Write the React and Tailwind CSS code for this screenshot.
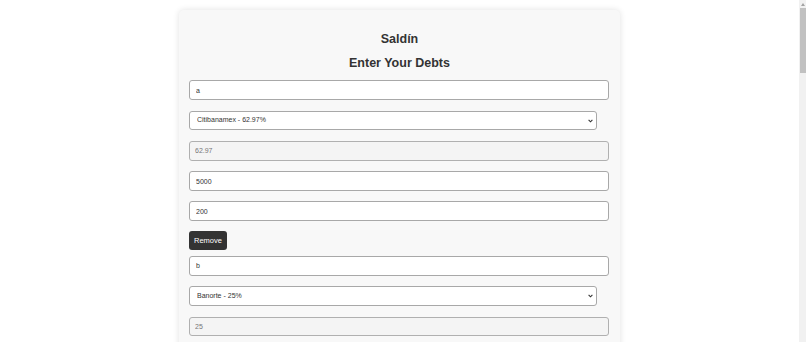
import { useState } from "react";

const BANKS = [
  { name: "Citibanamex", rate: 62.97 },
  { name: "Banorte", rate: 25 },
  { name: "BBVA", rate: 49.5 },
];

function DebtForm({ debt, onChange, onRemove }) {
  const inputCls =
    "block w-[420px] h-[20px] px-[6px] text-[7px] text-[#333] bg-white border border-[#a8a8a8] rounded-[3px] outline-none";
  return (
    <div className="flex flex-col">
      <input
        className={inputCls + " mb-[10.5px]"}
        value={debt.name}
        onChange={(e) => onChange({ ...debt, name: e.target.value })}
      />
      <div className="relative w-[408px] mb-[11px]">
        <select
          className="appearance-none block w-full h-[19.5px] pl-[7px] pr-[12px] text-[7px] text-[#333] bg-white border border-[#a8a8a8] rounded-[3px]"
          value={debt.bank}
          onChange={(e) => onChange({ ...debt, bank: e.target.value })}
        >
          {BANKS.map((b) => (
            <option key={b.name} value={b.name}>
              {b.name} - {b.rate}%
            </option>
          ))}
        </select>
        <svg
          className="pointer-events-none absolute right-[4px] top-[8px]"
          width="5"
          height="4"
          viewBox="0 0 5 4"
        >
          <path d="M0.6 0.8 L2.5 2.8 L4.4 0.8" fill="none" stroke="#333" strokeWidth="1.1" />
        </svg>
      </div>
      <input
        className="block w-[420px] h-[19.5px] px-[5px] text-[7px] text-[#777] bg-[#f4f4f4] border border-[#b0b0b0] rounded-[3px] mb-[10.5px]"
        value={BANKS.find((b) => b.name === debt.bank).rate}
        disabled
      />
      <input
        className={inputCls + " mb-[10px]"}
        value={debt.amount}
        onChange={(e) => onChange({ ...debt, amount: e.target.value })}
      />
      <input
        className={inputCls + " mb-[10px]"}
        value={debt.payment}
        onChange={(e) => onChange({ ...debt, payment: e.target.value })}
      />
      <button
        onClick={onRemove}
        className="self-start h-[19px] px-[5px] text-[7.5px] text-white bg-[#333] rounded-[3px] mb-[5.5px]"
      >
        Remove
      </button>
    </div>
  );
}

export default function App() {
  const [debts, setDebts] = useState([
    { id: 1, name: "a", bank: "Citibanamex", amount: "5000", payment: "200" },
    { id: 2, name: "b", bank: "Banorte", amount: "3000", payment: "150" },
  ]);

  return (
    <div
      className="flex h-screen overflow-hidden bg-white"
      style={{ fontFamily: '"Liberation Sans", Arial, sans-serif' }}
    >
      <div className="flex-1 pt-[10px]">
        <div className="mx-auto w-[441px] p-[10px] bg-[#f8f8f8] rounded-[5px] shadow-[0_0_6px_rgba(0,0,0,0.12)]">
          <h1 className="mt-[12px] text-center text-[12.5px] leading-[15px] font-bold text-[#333]">
            Saldín
          </h1>
          <h2 className="mt-[9px] mb-[9px] text-center text-[12.5px] leading-[15px] font-bold text-[#333]">
            Enter Your Debts
          </h2>
          {debts.map((d) => (
            <DebtForm
              key={d.id}
              debt={d}
              onChange={(nd) =>
                setDebts(debts.map((x) => (x.id === d.id ? nd : x)))
              }
              onRemove={() => setDebts(debts.filter((x) => x.id !== d.id))}
            />
          ))}
          <button className="h-[19px] px-[5px] text-[7.5px] text-white bg-[#333] rounded-[3px]">
            Add Debt
          </button>
        </div>
      </div>
      {/* scrollbar */}
      <div className="w-[7px] shrink-0 flex flex-col bg-[#f1f1f1]">
        <div className="h-[8px] flex items-center justify-center">
          <svg width="4" height="3" viewBox="0 0 4 3">
            <path d="M0 3 L2 0 L4 3 Z" fill="#a3a3a3" />
          </svg>
        </div>
        <div className="h-[65px] mx-[0.5px] bg-[#c1c1c1]" />
      </div>
    </div>
  );
}
